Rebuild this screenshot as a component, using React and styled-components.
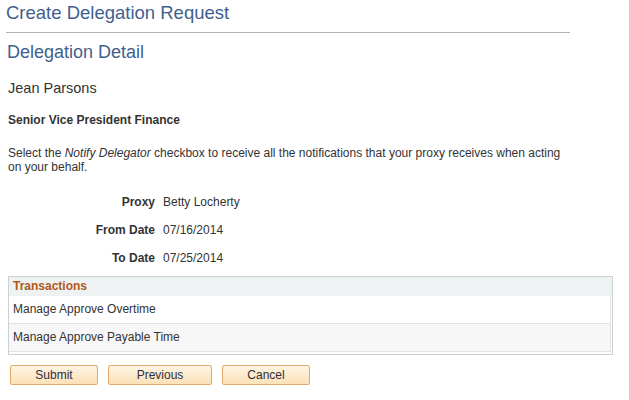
import React from "react";
import styled, { createGlobalStyle } from "styled-components";

const Global = createGlobalStyle`
  html, body { margin: 0; padding: 0; background: #fff; }
  body { font-family: "Liberation Sans", Arial, sans-serif; color: #333; }
`;

const Page = styled.div`
  width: 629px;
  height: 400px;
  box-sizing: border-box;
  padding: 2px 0 0 8px;
  display: flex;
  flex-direction: column;
  align-items: flex-start;
`;

const PageTitle = styled.h1`
  margin: 0 0 0 -2px;
  font-size: 18.5px;
  line-height: 22px;
  font-weight: normal;
  color: #3f5f8e;
`;

const Rule = styled.hr`
  margin: 8px 0 0 -2px;
  width: 564px;
  height: 0;
  border: 0;
  border-top: 1px solid #b3b3b3;
`;

const SectionTitle = styled.h2`
  margin: 9px 0 0 -1px;
  font-size: 18px;
  line-height: 20px;
  font-weight: normal;
  color: #3f5f8e;
`;

const Name = styled.div`
  margin-top: 18px;
  font-size: 14.5px;
  line-height: 17px;
`;

const JobTitle = styled.div`
  margin-top: 16px;
  font-size: 12px;
  line-height: 14px;
  font-weight: bold;
`;

const Instructions = styled.p`
  margin: 19px 0 0 0;
  width: 566px;
  font-size: 12px;
  line-height: 14px;
`;

const Fields = styled.div`
  margin-top: 21px;
  display: grid;
  grid-template-columns: 147px auto;
  column-gap: 8px;
  row-gap: 14px;
  font-size: 12px;
  line-height: 14px;
`;

const Label = styled.div`
  text-align: right;
  font-weight: bold;
`;

const Value = styled.div``;

const Grid = styled.div`
  margin-top: 11px;
  width: 605px;
  box-sizing: border-box;
  border: 1px solid #c9d0d6;
`;

const GridHeader = styled.div`
  height: 19px;
  line-height: 19px;
  padding-left: 4px;
  background: #eef2f3;
  color: #b0581a;
  font-size: 12px;
  font-weight: bold;
`;

const GridBody = styled.div`
  margin-right: 1px;
  padding-bottom: 2px;
`;

const GridRow = styled.div`
  height: 27px;
  line-height: 27px;
  padding-left: 4px;
  font-size: 12px;
  background: ${(p) => (p.$alt ? "#f7f7f7" : "#ffffff")};
  border-right: 1px solid #e2e2e2;
  border-bottom: 1px solid #e2e2e2;
`;

const Buttons = styled.div`
  margin: 10px 0 0 2px;
  display: flex;
  gap: 10px;
`;

const Button = styled.button`
  width: ${(p) => p.$w}px;
  height: 20px;
  box-sizing: border-box;
  padding: 0;
  border: 1px solid #e3a96c;
  border-radius: 2px;
  background: linear-gradient(#fdf4e4, #fbe1b6);
  font-family: "Liberation Sans", Arial, sans-serif;
  font-size: 12px;
  color: #2e2e3a;
  line-height: 18px;
`;

export default function App() {
  return (
    <>
      <Global />
      <Page>
        <PageTitle>Create Delegation Request</PageTitle>
        <Rule />
        <SectionTitle>Delegation Detail</SectionTitle>
        <Name>Jean Parsons</Name>
        <JobTitle>Senior Vice President Finance</JobTitle>
        <Instructions>
          Select the <i>Notify Delegator</i> checkbox to receive all the notifications that your proxy receives when acting on your behalf.
        </Instructions>
        <Fields>
          <Label>Proxy</Label>
          <Value>Betty Locherty</Value>
          <Label>From Date</Label>
          <Value>07/16/2014</Value>
          <Label>To Date</Label>
          <Value>07/25/2014</Value>
        </Fields>
        <Grid>
          <GridHeader>Transactions</GridHeader>
          <GridBody>
            <GridRow>Manage Approve Overtime</GridRow>
            <GridRow $alt>Manage Approve Payable Time</GridRow>
          </GridBody>
        </Grid>
        <Buttons>
          <Button $w={88}>Submit</Button>
          <Button $w={104}>Previous</Button>
          <Button $w={88}>Cancel</Button>
        </Buttons>
      </Page>
    </>
  );
}
